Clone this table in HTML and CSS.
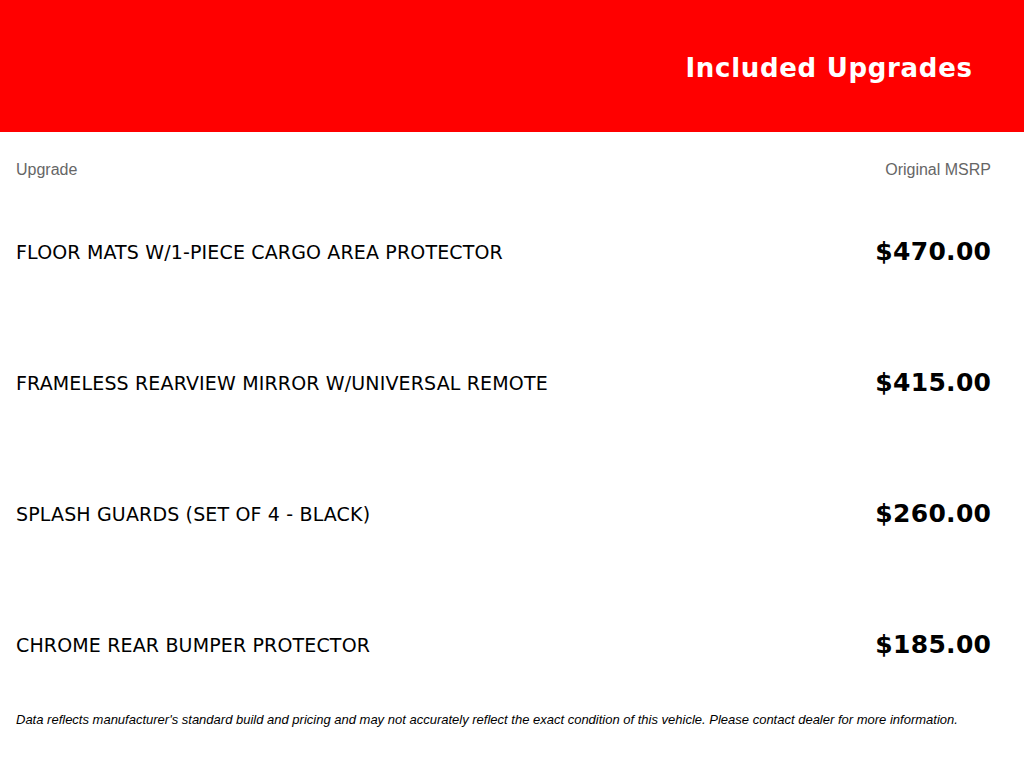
FILE: index.html
```html
<!DOCTYPE html>
<html lang="en">
<head>
<meta charset="utf-8">
<title>Included Upgrades</title>
<link rel="stylesheet" href="styles.css">
</head>
<body>
<header class="banner">
  <h1 class="banner-title">Included Upgrades</h1>
</header>
<main class="content">
  <div class="col-heads">
    <span>Upgrade</span>
    <span>Original MSRP</span>
  </div>
  <ul class="upgrades">
    <li class="upgrade"><span class="name">FLOOR MATS W/1-PIECE CARGO AREA PROTECTOR</span><span class="price">$470.00</span></li>
    <li class="upgrade"><span class="name">FRAMELESS REARVIEW MIRROR W/UNIVERSAL REMOTE</span><span class="price">$415.00</span></li>
    <li class="upgrade"><span class="name">SPLASH GUARDS (SET OF 4 - BLACK)</span><span class="price">$260.00</span></li>
    <li class="upgrade"><span class="name">CHROME REAR BUMPER PROTECTOR</span><span class="price">$185.00</span></li>
  </ul>
  <p class="note">Data reflects manufacturer's standard build and pricing and may not accurately reflect the exact condition of this vehicle. Please contact dealer for more information.</p>
</main>
</body>
</html>
```
FILE: styles.css
```css
html, body {
  margin: 0;
  padding: 0;
  background: #ffffff;
}
body {
  font-family: "DejaVu Sans", "Liberation Sans", sans-serif;
  color: #000;
}
.banner {
  background: #ff0000;
  height: 132px;
  display: flex;
  align-items: center;
  justify-content: flex-end;
  padding: 3px 52px 0 0;
  box-sizing: border-box;
}
.banner-title {
  margin: 0 -0.7px 0 0;
  color: #ffffff;
  font-family: "DejaVu Sans", sans-serif;
  font-weight: 700;
  font-size: 26px;
  line-height: 1;
  letter-spacing: 0.7px;
}
.content {
  padding: 0 33px 0 16px;
}
.col-heads {
  display: flex;
  justify-content: space-between;
  padding-top: 28px;
  font-family: "Liberation Sans", Arial, sans-serif;
  font-size: 16px;
  line-height: 20px;
  color: #666666;
}
.upgrades {
  list-style: none;
  margin: 6px 0 0;
  padding: 0;
}
.upgrade {
  display: flex;
  justify-content: space-between;
  align-items: center;
  height: 131px;
}
.name {
  font-size: 19px;
  font-weight: 400;
  letter-spacing: 0.15px;
}
.price {
  font-size: 25px;
  font-weight: 700;
  letter-spacing: 0.3px;
  margin-right: -0.3px;
}
.note {
  margin: 0;
  font-family: "Liberation Sans", Arial, sans-serif;
  font-style: italic;
  font-size: 13px;
  line-height: 16px;
  color: #000;
  padding-top: 2px;
}
```
